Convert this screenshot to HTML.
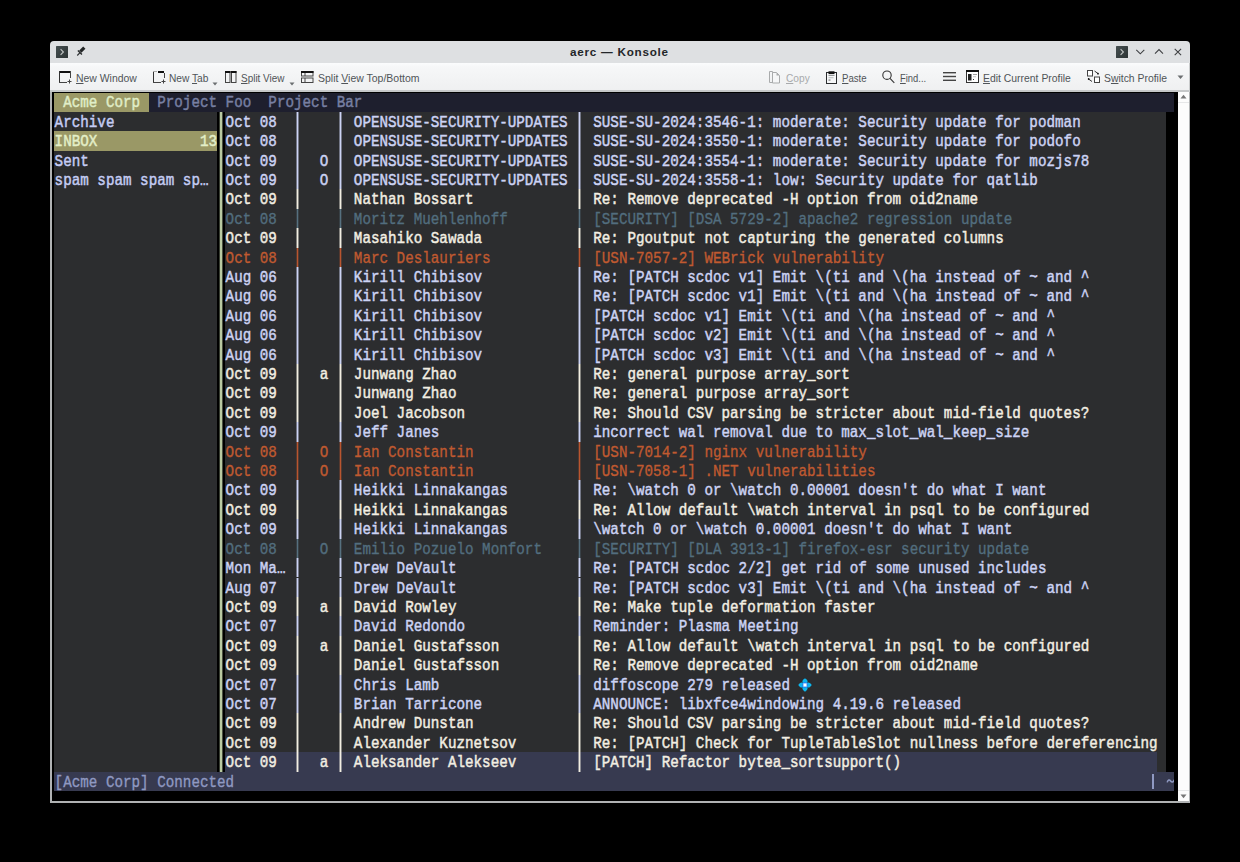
<!DOCTYPE html>
<html><head><meta charset="utf-8">
<style>
html,body{margin:0;padding:0;background:#000;width:1240px;height:862px;overflow:hidden;}
.win{position:absolute;left:50px;top:41px;width:1140px;height:762px;background:#000;border-radius:4px 4px 0 0;}
.title{position:absolute;left:0;top:0;width:1140px;height:22px;background:#dee0e2;border-radius:4px 4px 0 0;}
.tbar{position:absolute;left:0;top:21.7px;width:1140px;height:27.1px;background:linear-gradient(#fbfcfd 0,#f6f7f8 4px,#eff0f1 100%);border-bottom:2px solid #c6c8c9;}
.brd{position:absolute;background:#b0b2b3;}
.r{position:absolute;}
.t{position:absolute;white-space:pre;font-family:"Liberation Mono",monospace;font-size:14.25px;line-height:19.406px;height:19.406px;transform-origin:0 13.49px;transform:translateY(1.9px) scaleY(1.19);}
.ui{position:absolute;transform-origin:0 50%;white-space:pre;font-family:"Liberation Sans",sans-serif;font-size:10.7px;color:#505458;line-height:12px;}
.ui u{text-decoration:underline;text-underline-offset:0.6px;}
.ico{position:absolute;}
</style></head><body>
<div class="win">
 <div class="title"></div>
 <div class="tbar"></div>
</div>
<!-- title contents -->
<svg class="ico" style="left:56px;top:46px" width="12" height="12" viewBox="0 0 12 12"><defs><linearGradient id="cg" x1="0" y1="0" x2="1" y2="1"><stop offset="0" stop-color="#465051"/><stop offset="1" stop-color="#2c3334"/></linearGradient></defs><rect x="0" y="0" width="12" height="12" rx="0.5" fill="url(#cg)"/><path d="M4.6 3.2 L7.4 6 L4.6 8.8" stroke="#c3c6c6" stroke-width="1.1" fill="none"/></svg>
<svg class="ico" style="left:76px;top:46px" width="11" height="11" viewBox="0 0 11 11"><path d="M3.17 4.57 L7.17 0.57 L9.43 2.83 L5.43 6.83Z" fill="#232627"/><path d="M1.9 4.5 L5.9 8.4" stroke="#232627" stroke-width="1.4"/><path d="M4 6.7 L1.3 9.5" stroke="#2a2d2e" stroke-width="1.1"/></svg>
<div class="ui" style="left:570px;top:45.8px;font-weight:bold;font-size:11.7px;letter-spacing:0.75px;color:#232629;">aerc — Konsole</div>
<svg class="ico" style="left:1116px;top:46px" width="12" height="12" viewBox="0 0 12 12"><defs><linearGradient id="cg" x1="0" y1="0" x2="1" y2="1"><stop offset="0" stop-color="#465051"/><stop offset="1" stop-color="#2c3334"/></linearGradient></defs><rect x="0" y="0" width="12" height="12" rx="0.5" fill="url(#cg)"/><path d="M4.6 3.2 L7.4 6 L4.6 8.8" stroke="#c3c6c6" stroke-width="1.1" fill="none"/></svg>
<svg class="ico" style="left:1135px;top:48px" width="11" height="8" viewBox="0 0 11 8"><path d="M1.3 1.8 L5.3 5.8 L9.3 1.8" stroke="#3c3e40" stroke-width="1.05" fill="none"/></svg>
<svg class="ico" style="left:1154px;top:48px" width="11" height="8" viewBox="0 0 11 8"><path d="M1.0 5.6 L5.0 1.6 L9.0 5.6" stroke="#3c3e40" stroke-width="1.05" fill="none"/></svg>
<svg class="ico" style="left:1173px;top:47px" width="10" height="10" viewBox="0 0 10 10"><path d="M1.7 1.9 L8.1 8.2 M8.1 1.9 L1.7 8.2" stroke="#3c3e40" stroke-width="1.05" fill="none"/></svg>

<!-- toolbar -->
<svg class="ico" style="left:59px;top:71px" width="13" height="13" viewBox="0 0 13 13"><rect x="0" y="0" width="12" height="2" fill="#111"/><rect x="0" y="0" width="1" height="12" fill="#333"/><rect x="0" y="11" width="8" height="1" fill="#444"/><rect x="11" y="0" width="1" height="7" fill="#444"/><path d="M10.5 8.5 V12.5 M8.5 10.5 H12.5" stroke="#444" stroke-width="1"/></svg>
<div class="ui" style="left:75.5px;top:72px;transform:scaleX(0.976)"><u>N</u>ew Window</div>
<svg class="ico" style="left:153px;top:71px" width="13" height="13" viewBox="0 0 13 13"><rect x="5" y="0" width="6" height="2" fill="#111"/><rect x="0" y="0" width="1" height="12" fill="#333"/><rect x="0" y="0" width="4" height="1" fill="#aaa"/><rect x="0" y="11" width="8" height="1" fill="#444"/><rect x="11" y="2" width="1" height="5" fill="#444"/><path d="M10.5 8.5 V12.5 M8.5 10.5 H12.5" stroke="#444" stroke-width="1"/></svg>
<div class="ui" style="left:169px;top:72px;transform:scaleX(0.952)">New <u>T</u>ab</div>
<svg class="ico" style="left:212px;top:82px" width="6" height="4" viewBox="0 0 6 4"><path d="M0.5 0.5 L5.5 0.5 L3 3.5Z" fill="#6b6e70"/></svg>
<svg class="ico" style="left:225px;top:71px" width="13" height="13" viewBox="0 0 13 13"><rect x="0.5" y="0.5" width="4.5" height="11" fill="none" stroke="#444" stroke-width="1"/><rect x="0" y="0" width="5.5" height="2" fill="#111"/><rect x="6.5" y="0.5" width="4.5" height="11" fill="none" stroke="#444" stroke-width="1"/><rect x="6" y="0" width="5.5" height="2" fill="#111"/></svg>
<div class="ui" style="left:241px;top:72px;transform:scaleX(0.93)"><u>S</u>plit View</div>
<svg class="ico" style="left:289px;top:82px" width="6" height="4" viewBox="0 0 6 4"><path d="M0.5 0.5 L5.5 0.5 L3 3.5Z" fill="#6b6e70"/></svg>
<svg class="ico" style="left:301px;top:71px" width="13" height="13" viewBox="0 0 13 13"><rect x="0.5" y="0.5" width="11.5" height="4.5" fill="none" stroke="#444" stroke-width="1"/><rect x="0" y="0" width="12.5" height="2" fill="#111"/><rect x="0.5" y="7" width="11.5" height="4.5" fill="none" stroke="#444" stroke-width="1"/><rect x="3.5" y="2" width="1" height="3" fill="#444"/><rect x="3.5" y="7" width="1" height="4.5" fill="#444"/></svg>
<div class="ui" style="left:318px;top:72px;transform:scaleX(0.98)">Split <u>V</u>iew Top/Bottom</div>

<svg class="ico" style="left:769px;top:70.5px" width="12" height="13" viewBox="0 0 12 13"><path d="M0.5 0.5 H3.5 V11.5 H0.5Z" fill="none" stroke="#a9abac"/><path d="M3.5 1.5 H7.5 L10.5 4.5 V12 H3.5Z" fill="#f6f7f8" stroke="#a9abac"/><path d="M7.5 1.5 L10.5 4.5 H7.5Z" fill="#a9abac"/></svg>
<div class="ui" style="left:785.5px;top:72px;color:#a8aaac;transform:scaleX(0.95)"><u>C</u>opy</div>
<svg class="ico" style="left:826px;top:70.5px" width="11" height="13" viewBox="0 0 11 13"><rect x="0.5" y="1.5" width="10" height="11" fill="#f6f7f8" stroke="#2a2c2e" stroke-width="1"/><rect x="2.5" y="0.3" width="6" height="2.8" fill="#111"/><rect x="2.5" y="4" width="6" height="0.9" fill="#8a8c8e"/><rect x="2.5" y="6.3" width="5" height="0.9" fill="#b0b2b4"/><rect x="2.5" y="8.6" width="2" height="0.9" fill="#555"/></svg>
<div class="ui" style="left:842px;top:72px;transform:scaleX(0.90)"><u>P</u>aste</div>
<svg class="ico" style="left:882px;top:70px" width="13" height="14" viewBox="0 0 13 14"><circle cx="5" cy="5.2" r="4.2" fill="none" stroke="#333" stroke-width="1.1"/><path d="M8 8.3 L12.3 12.8" stroke="#333" stroke-width="1.1"/></svg>
<div class="ui" style="left:899.5px;top:72px;transform:scaleX(0.88)"><u>F</u>ind...</div>
<svg class="ico" style="left:943px;top:71px" width="13" height="11" viewBox="0 0 13 11"><rect x="0" y="1" width="13" height="1.4" fill="#444"/><rect x="0" y="4.8" width="13" height="1.4" fill="#444"/><rect x="0" y="8.6" width="13" height="1.4" fill="#444"/></svg>
<svg class="ico" style="left:966px;top:70px" width="13" height="13" viewBox="0 0 13 13"><rect x="0.5" y="0.5" width="12" height="12" fill="#fff" stroke="#333" stroke-width="1"/><rect x="0" y="0" width="13" height="2" fill="#111"/><rect x="2" y="4" width="3.5" height="6.5" fill="#222"/><rect x="7" y="4" width="4" height="0.8" fill="#888"/><rect x="7" y="6.3" width="3" height="0.9" fill="#bbb"/><rect x="7" y="9" width="1" height="1" fill="#333"/></svg>
<div class="ui" style="left:983px;top:72px;transform:scaleX(0.973)"><u>E</u>dit Current Profile</div>
<svg class="ico" style="left:1087px;top:70px" width="13" height="13" viewBox="0 0 13 13"><rect x="0.5" y="0.5" width="5" height="5.5" fill="#fff" stroke="#444" stroke-width="1"/><rect x="7.5" y="7" width="5" height="5.5" fill="#fff" stroke="#444" stroke-width="1"/><path d="M7.5 1 L11 3.5" stroke="#333" stroke-width="1"/><circle cx="11" cy="3.7" r="0.9" fill="#111"/><path d="M5 11.5 L1.5 9" stroke="#333" stroke-width="1"/><circle cx="1.7" cy="9" r="0.9" fill="#111"/></svg>
<div class="ui" style="left:1103.5px;top:72px;transform:scaleX(0.973)">S<u>w</u>itch Profile</div>
<svg class="ico" style="left:1177px;top:75px" width="7" height="5" viewBox="0 0 7 5"><path d="M0.5 0.5 L6.5 0.5 L3.5 4Z" fill="#6b6e70"/></svg>

<!-- scrollbar -->
<div class="r" style="left:1177.6px;top:92px;width:11.4px;height:709px;background:#fcfcfc;"></div>
<div class="r" style="left:1178px;top:102px;width:11px;height:1px;background:#e6e7e8;"></div>
<div class="r" style="left:1178px;top:790px;width:11px;height:1px;background:#e6e7e8;"></div>
<svg class="ico" style="left:1180px;top:94px" width="7" height="5" viewBox="0 0 7 5"><path d="M0.5 4.5 L6.5 4.5 L3.5 0.8Z" fill="#777"/></svg>
<svg class="ico" style="left:1180px;top:793.5px" width="7" height="5" viewBox="0 0 7 5"><path d="M0.5 0.5 L6.5 0.5 L3.5 4.2Z" fill="#777"/></svg>

<!-- borders -->
<div class="brd" style="left:50px;top:91.5px;width:1.5px;height:711.5px;"></div>
<div class="brd" style="left:1188.5px;top:91.5px;width:1.5px;height:711.5px;"></div>
<div class="brd" style="left:1189px;top:62.7px;width:1px;height:29px;background:#c9cbcc"></div>
<div class="brd" style="left:50px;top:801px;width:1140px;height:2px;"></div>

<div class="r" style="left:54.00px;top:92.60px;width:1120.05px;height:19.16px;background:#1e1f2e;"></div>
<div class="r" style="left:54.00px;top:92.60px;width:95.00px;height:19.16px;background:#9a9866;"></div>
<div class="t" style="left:63.15px;top:92.35px;color:#e0eec8;-webkit-text-stroke:0.4px #e0eec8;">Acme Corp</div>
<div class="t" style="left:157.20px;top:92.35px;color:#777fa2;-webkit-text-stroke:0.4px #777fa2;">Project Foo</div>
<div class="t" style="left:268.35px;top:92.35px;color:#777fa2;-webkit-text-stroke:0.4px #777fa2;">Project Bar</div>
<div class="r" style="left:54.00px;top:111.76px;width:163.00px;height:659.80px;background:#2c2d2f;"></div>
<div class="r" style="left:225.00px;top:111.76px;width:940.50px;height:659.80px;background:#2c2d2f;"></div>
<div class="t" style="left:54.60px;top:111.76px;color:#c4ccf4;-webkit-text-stroke:0.4px #c4ccf4;">Archive</div>
<div class="r" style="left:54.00px;top:131.16px;width:163.00px;height:19.41px;background:#9a9866;"></div>
<div class="t" style="left:54.60px;top:131.16px;color:#e4efc8;-webkit-text-stroke:0.4px #e4efc8;">INBOX</div>
<div class="t" style="left:199.95px;top:131.16px;color:#e4efc8;-webkit-text-stroke:0.4px #e4efc8;">13</div>
<div class="t" style="left:54.60px;top:150.57px;color:#c4ccf4;-webkit-text-stroke:0.4px #c4ccf4;">Sent</div>
<div class="t" style="left:54.60px;top:169.97px;color:#c4ccf4;-webkit-text-stroke:0.4px #c4ccf4;">spam spam spam sp…</div>
<div class="r" style="left:219.00px;top:111.76px;width:4.00px;height:659.80px;background:transparent;background:linear-gradient(to right,rgba(185,201,161,.3) 0 1px,#b9c9a1 1px 3px,rgba(185,201,161,.4) 3px 4px);"></div>
<div class="r" style="left:296.00px;top:111.76px;width:3.00px;height:19.41px;background:transparent;background:linear-gradient(to right,rgba(204,211,244,0.45) 0 1px,#ccd3f4 1px 2px,rgba(204,211,244,0.45) 2px 3px);"></div>
<div class="r" style="left:339.00px;top:111.76px;width:3.00px;height:19.41px;background:transparent;background:linear-gradient(to right,rgba(204,211,244,0.45) 0 1px,#ccd3f4 1px 2px,rgba(204,211,244,0.45) 2px 3px);"></div>
<div class="r" style="left:578.00px;top:111.76px;width:3.00px;height:19.41px;background:transparent;background:linear-gradient(to right,rgba(204,211,244,0.45) 0 1px,#ccd3f4 1px 2px,rgba(204,211,244,0.45) 2px 3px);"></div>
<div class="t" style="left:225.60px;top:111.76px;color:#ccd3f4;-webkit-text-stroke:0.4px #ccd3f4;">Oct 08</div>
<div class="t" style="left:353.85px;top:111.76px;color:#ccd3f4;-webkit-text-stroke:0.4px #ccd3f4;">OPENSUSE-SECURITY-UPDATES</div>
<div class="t" style="left:593.25px;top:111.76px;color:#ccd3f4;-webkit-text-stroke:0.4px #ccd3f4;">SUSE-SU-2024:3546-1: moderate: Security update for podman</div>
<div class="r" style="left:296.00px;top:131.16px;width:3.00px;height:19.41px;background:transparent;background:linear-gradient(to right,rgba(204,211,244,0.45) 0 1px,#ccd3f4 1px 2px,rgba(204,211,244,0.45) 2px 3px);"></div>
<div class="r" style="left:339.00px;top:131.16px;width:3.00px;height:19.41px;background:transparent;background:linear-gradient(to right,rgba(204,211,244,0.45) 0 1px,#ccd3f4 1px 2px,rgba(204,211,244,0.45) 2px 3px);"></div>
<div class="r" style="left:578.00px;top:131.16px;width:3.00px;height:19.41px;background:transparent;background:linear-gradient(to right,rgba(204,211,244,0.45) 0 1px,#ccd3f4 1px 2px,rgba(204,211,244,0.45) 2px 3px);"></div>
<div class="t" style="left:225.60px;top:131.16px;color:#ccd3f4;-webkit-text-stroke:0.4px #ccd3f4;">Oct 08</div>
<div class="t" style="left:353.85px;top:131.16px;color:#ccd3f4;-webkit-text-stroke:0.4px #ccd3f4;">OPENSUSE-SECURITY-UPDATES</div>
<div class="t" style="left:593.25px;top:131.16px;color:#ccd3f4;-webkit-text-stroke:0.4px #ccd3f4;">SUSE-SU-2024:3550-1: moderate: Security update for podofo</div>
<div class="r" style="left:296.00px;top:150.57px;width:3.00px;height:19.41px;background:transparent;background:linear-gradient(to right,rgba(204,211,244,0.45) 0 1px,#ccd3f4 1px 2px,rgba(204,211,244,0.45) 2px 3px);"></div>
<div class="r" style="left:339.00px;top:150.57px;width:3.00px;height:19.41px;background:transparent;background:linear-gradient(to right,rgba(204,211,244,0.45) 0 1px,#ccd3f4 1px 2px,rgba(204,211,244,0.45) 2px 3px);"></div>
<div class="r" style="left:578.00px;top:150.57px;width:3.00px;height:19.41px;background:transparent;background:linear-gradient(to right,rgba(204,211,244,0.45) 0 1px,#ccd3f4 1px 2px,rgba(204,211,244,0.45) 2px 3px);"></div>
<div class="t" style="left:225.60px;top:150.57px;color:#ccd3f4;-webkit-text-stroke:0.4px #ccd3f4;">Oct 09</div>
<div class="t" style="left:319.65px;top:150.57px;color:#ccd3f4;-webkit-text-stroke:0.4px #ccd3f4;">O</div>
<div class="t" style="left:353.85px;top:150.57px;color:#ccd3f4;-webkit-text-stroke:0.4px #ccd3f4;">OPENSUSE-SECURITY-UPDATES</div>
<div class="t" style="left:593.25px;top:150.57px;color:#ccd3f4;-webkit-text-stroke:0.4px #ccd3f4;">SUSE-SU-2024:3554-1: moderate: Security update for mozjs78</div>
<div class="r" style="left:296.00px;top:169.97px;width:3.00px;height:19.41px;background:transparent;background:linear-gradient(to right,rgba(204,211,244,0.45) 0 1px,#ccd3f4 1px 2px,rgba(204,211,244,0.45) 2px 3px);"></div>
<div class="r" style="left:339.00px;top:169.97px;width:3.00px;height:19.41px;background:transparent;background:linear-gradient(to right,rgba(204,211,244,0.45) 0 1px,#ccd3f4 1px 2px,rgba(204,211,244,0.45) 2px 3px);"></div>
<div class="r" style="left:578.00px;top:169.97px;width:3.00px;height:19.41px;background:transparent;background:linear-gradient(to right,rgba(204,211,244,0.45) 0 1px,#ccd3f4 1px 2px,rgba(204,211,244,0.45) 2px 3px);"></div>
<div class="t" style="left:225.60px;top:169.97px;color:#ccd3f4;-webkit-text-stroke:0.4px #ccd3f4;">Oct 09</div>
<div class="t" style="left:319.65px;top:169.97px;color:#ccd3f4;-webkit-text-stroke:0.4px #ccd3f4;">O</div>
<div class="t" style="left:353.85px;top:169.97px;color:#ccd3f4;-webkit-text-stroke:0.4px #ccd3f4;">OPENSUSE-SECURITY-UPDATES</div>
<div class="t" style="left:593.25px;top:169.97px;color:#ccd3f4;-webkit-text-stroke:0.4px #ccd3f4;">SUSE-SU-2024:3558-1: low: Security update for qatlib</div>
<div class="r" style="left:296.00px;top:189.38px;width:3.00px;height:19.41px;background:transparent;background:linear-gradient(to right,rgba(242,238,226,0.45) 0 1px,#f2eee2 1px 2px,rgba(242,238,226,0.45) 2px 3px);"></div>
<div class="r" style="left:339.00px;top:189.38px;width:3.00px;height:19.41px;background:transparent;background:linear-gradient(to right,rgba(242,238,226,0.45) 0 1px,#f2eee2 1px 2px,rgba(242,238,226,0.45) 2px 3px);"></div>
<div class="r" style="left:578.00px;top:189.38px;width:3.00px;height:19.41px;background:transparent;background:linear-gradient(to right,rgba(242,238,226,0.45) 0 1px,#f2eee2 1px 2px,rgba(242,238,226,0.45) 2px 3px);"></div>
<div class="t" style="left:225.60px;top:189.38px;color:#f2eee2;-webkit-text-stroke:0.4px #f2eee2;">Oct 09</div>
<div class="t" style="left:353.85px;top:189.38px;color:#f2eee2;-webkit-text-stroke:0.4px #f2eee2;">Nathan Bossart</div>
<div class="t" style="left:593.25px;top:189.38px;color:#f2eee2;-webkit-text-stroke:0.4px #f2eee2;">Re: Remove deprecated -H option from oid2name</div>
<div class="r" style="left:296.00px;top:208.79px;width:3.00px;height:19.41px;background:transparent;background:linear-gradient(to right,rgba(86,112,127,0.3) 0 1px,#56707f 1px 2px,rgba(86,112,127,0.3) 2px 3px);"></div>
<div class="r" style="left:339.00px;top:208.79px;width:3.00px;height:19.41px;background:transparent;background:linear-gradient(to right,rgba(86,112,127,0.3) 0 1px,#56707f 1px 2px,rgba(86,112,127,0.3) 2px 3px);"></div>
<div class="r" style="left:578.00px;top:208.79px;width:3.00px;height:19.41px;background:transparent;background:linear-gradient(to right,rgba(86,112,127,0.3) 0 1px,#56707f 1px 2px,rgba(86,112,127,0.3) 2px 3px);"></div>
<div class="t" style="left:225.60px;top:208.79px;color:#526d7e;-webkit-text-stroke:0.3px #526d7e;">Oct 08</div>
<div class="t" style="left:353.85px;top:208.79px;color:#526d7e;-webkit-text-stroke:0.3px #526d7e;">Moritz Muehlenhoff</div>
<div class="t" style="left:593.25px;top:208.79px;color:#526d7e;-webkit-text-stroke:0.3px #526d7e;">[SECURITY] [DSA 5729-2] apache2 regression update</div>
<div class="r" style="left:296.00px;top:228.19px;width:3.00px;height:19.41px;background:transparent;background:linear-gradient(to right,rgba(242,238,226,0.45) 0 1px,#f2eee2 1px 2px,rgba(242,238,226,0.45) 2px 3px);"></div>
<div class="r" style="left:339.00px;top:228.19px;width:3.00px;height:19.41px;background:transparent;background:linear-gradient(to right,rgba(242,238,226,0.45) 0 1px,#f2eee2 1px 2px,rgba(242,238,226,0.45) 2px 3px);"></div>
<div class="r" style="left:578.00px;top:228.19px;width:3.00px;height:19.41px;background:transparent;background:linear-gradient(to right,rgba(242,238,226,0.45) 0 1px,#f2eee2 1px 2px,rgba(242,238,226,0.45) 2px 3px);"></div>
<div class="t" style="left:225.60px;top:228.19px;color:#f2eee2;-webkit-text-stroke:0.4px #f2eee2;">Oct 09</div>
<div class="t" style="left:353.85px;top:228.19px;color:#f2eee2;-webkit-text-stroke:0.4px #f2eee2;">Masahiko Sawada</div>
<div class="t" style="left:593.25px;top:228.19px;color:#f2eee2;-webkit-text-stroke:0.4px #f2eee2;">Re: Pgoutput not capturing the generated columns</div>
<div class="r" style="left:296.00px;top:247.60px;width:3.00px;height:19.41px;background:transparent;background:linear-gradient(to right,rgba(185,85,47,0.3) 0 1px,#b9552f 1px 2px,rgba(185,85,47,0.3) 2px 3px);"></div>
<div class="r" style="left:339.00px;top:247.60px;width:3.00px;height:19.41px;background:transparent;background:linear-gradient(to right,rgba(185,85,47,0.3) 0 1px,#b9552f 1px 2px,rgba(185,85,47,0.3) 2px 3px);"></div>
<div class="r" style="left:578.00px;top:247.60px;width:3.00px;height:19.41px;background:transparent;background:linear-gradient(to right,rgba(185,85,47,0.3) 0 1px,#b9552f 1px 2px,rgba(185,85,47,0.3) 2px 3px);"></div>
<div class="t" style="left:225.60px;top:247.60px;color:#c05a30;-webkit-text-stroke:0.3px #c05a30;">Oct 08</div>
<div class="t" style="left:353.85px;top:247.60px;color:#c05a30;-webkit-text-stroke:0.3px #c05a30;">Marc Deslauriers</div>
<div class="t" style="left:593.25px;top:247.60px;color:#c05a30;-webkit-text-stroke:0.3px #c05a30;">[USN-7057-2] WEBrick vulnerability</div>
<div class="r" style="left:296.00px;top:267.00px;width:3.00px;height:19.41px;background:transparent;background:linear-gradient(to right,rgba(204,211,244,0.45) 0 1px,#ccd3f4 1px 2px,rgba(204,211,244,0.45) 2px 3px);"></div>
<div class="r" style="left:339.00px;top:267.00px;width:3.00px;height:19.41px;background:transparent;background:linear-gradient(to right,rgba(204,211,244,0.45) 0 1px,#ccd3f4 1px 2px,rgba(204,211,244,0.45) 2px 3px);"></div>
<div class="r" style="left:578.00px;top:267.00px;width:3.00px;height:19.41px;background:transparent;background:linear-gradient(to right,rgba(204,211,244,0.45) 0 1px,#ccd3f4 1px 2px,rgba(204,211,244,0.45) 2px 3px);"></div>
<div class="t" style="left:225.60px;top:267.00px;color:#ccd3f4;-webkit-text-stroke:0.4px #ccd3f4;">Aug 06</div>
<div class="t" style="left:353.85px;top:267.00px;color:#ccd3f4;-webkit-text-stroke:0.4px #ccd3f4;">Kirill Chibisov</div>
<div class="t" style="left:593.25px;top:267.00px;color:#ccd3f4;-webkit-text-stroke:0.4px #ccd3f4;">Re: [PATCH scdoc v1] Emit \(ti and \(ha instead of ~ and ^</div>
<div class="r" style="left:296.00px;top:286.41px;width:3.00px;height:19.41px;background:transparent;background:linear-gradient(to right,rgba(204,211,244,0.45) 0 1px,#ccd3f4 1px 2px,rgba(204,211,244,0.45) 2px 3px);"></div>
<div class="r" style="left:339.00px;top:286.41px;width:3.00px;height:19.41px;background:transparent;background:linear-gradient(to right,rgba(204,211,244,0.45) 0 1px,#ccd3f4 1px 2px,rgba(204,211,244,0.45) 2px 3px);"></div>
<div class="r" style="left:578.00px;top:286.41px;width:3.00px;height:19.41px;background:transparent;background:linear-gradient(to right,rgba(204,211,244,0.45) 0 1px,#ccd3f4 1px 2px,rgba(204,211,244,0.45) 2px 3px);"></div>
<div class="t" style="left:225.60px;top:286.41px;color:#ccd3f4;-webkit-text-stroke:0.4px #ccd3f4;">Aug 06</div>
<div class="t" style="left:353.85px;top:286.41px;color:#ccd3f4;-webkit-text-stroke:0.4px #ccd3f4;">Kirill Chibisov</div>
<div class="t" style="left:593.25px;top:286.41px;color:#ccd3f4;-webkit-text-stroke:0.4px #ccd3f4;">Re: [PATCH scdoc v1] Emit \(ti and \(ha instead of ~ and ^</div>
<div class="r" style="left:296.00px;top:305.82px;width:3.00px;height:19.41px;background:transparent;background:linear-gradient(to right,rgba(204,211,244,0.45) 0 1px,#ccd3f4 1px 2px,rgba(204,211,244,0.45) 2px 3px);"></div>
<div class="r" style="left:339.00px;top:305.82px;width:3.00px;height:19.41px;background:transparent;background:linear-gradient(to right,rgba(204,211,244,0.45) 0 1px,#ccd3f4 1px 2px,rgba(204,211,244,0.45) 2px 3px);"></div>
<div class="r" style="left:578.00px;top:305.82px;width:3.00px;height:19.41px;background:transparent;background:linear-gradient(to right,rgba(204,211,244,0.45) 0 1px,#ccd3f4 1px 2px,rgba(204,211,244,0.45) 2px 3px);"></div>
<div class="t" style="left:225.60px;top:305.82px;color:#ccd3f4;-webkit-text-stroke:0.4px #ccd3f4;">Aug 06</div>
<div class="t" style="left:353.85px;top:305.82px;color:#ccd3f4;-webkit-text-stroke:0.4px #ccd3f4;">Kirill Chibisov</div>
<div class="t" style="left:593.25px;top:305.82px;color:#ccd3f4;-webkit-text-stroke:0.4px #ccd3f4;">[PATCH scdoc v1] Emit \(ti and \(ha instead of ~ and ^</div>
<div class="r" style="left:296.00px;top:325.22px;width:3.00px;height:19.41px;background:transparent;background:linear-gradient(to right,rgba(204,211,244,0.45) 0 1px,#ccd3f4 1px 2px,rgba(204,211,244,0.45) 2px 3px);"></div>
<div class="r" style="left:339.00px;top:325.22px;width:3.00px;height:19.41px;background:transparent;background:linear-gradient(to right,rgba(204,211,244,0.45) 0 1px,#ccd3f4 1px 2px,rgba(204,211,244,0.45) 2px 3px);"></div>
<div class="r" style="left:578.00px;top:325.22px;width:3.00px;height:19.41px;background:transparent;background:linear-gradient(to right,rgba(204,211,244,0.45) 0 1px,#ccd3f4 1px 2px,rgba(204,211,244,0.45) 2px 3px);"></div>
<div class="t" style="left:225.60px;top:325.22px;color:#ccd3f4;-webkit-text-stroke:0.4px #ccd3f4;">Aug 06</div>
<div class="t" style="left:353.85px;top:325.22px;color:#ccd3f4;-webkit-text-stroke:0.4px #ccd3f4;">Kirill Chibisov</div>
<div class="t" style="left:593.25px;top:325.22px;color:#ccd3f4;-webkit-text-stroke:0.4px #ccd3f4;">[PATCH scdoc v2] Emit \(ti and \(ha instead of ~ and ^</div>
<div class="r" style="left:296.00px;top:344.63px;width:3.00px;height:19.41px;background:transparent;background:linear-gradient(to right,rgba(204,211,244,0.45) 0 1px,#ccd3f4 1px 2px,rgba(204,211,244,0.45) 2px 3px);"></div>
<div class="r" style="left:339.00px;top:344.63px;width:3.00px;height:19.41px;background:transparent;background:linear-gradient(to right,rgba(204,211,244,0.45) 0 1px,#ccd3f4 1px 2px,rgba(204,211,244,0.45) 2px 3px);"></div>
<div class="r" style="left:578.00px;top:344.63px;width:3.00px;height:19.41px;background:transparent;background:linear-gradient(to right,rgba(204,211,244,0.45) 0 1px,#ccd3f4 1px 2px,rgba(204,211,244,0.45) 2px 3px);"></div>
<div class="t" style="left:225.60px;top:344.63px;color:#ccd3f4;-webkit-text-stroke:0.4px #ccd3f4;">Aug 06</div>
<div class="t" style="left:353.85px;top:344.63px;color:#ccd3f4;-webkit-text-stroke:0.4px #ccd3f4;">Kirill Chibisov</div>
<div class="t" style="left:593.25px;top:344.63px;color:#ccd3f4;-webkit-text-stroke:0.4px #ccd3f4;">[PATCH scdoc v3] Emit \(ti and \(ha instead of ~ and ^</div>
<div class="r" style="left:296.00px;top:364.03px;width:3.00px;height:19.41px;background:transparent;background:linear-gradient(to right,rgba(242,238,226,0.45) 0 1px,#f2eee2 1px 2px,rgba(242,238,226,0.45) 2px 3px);"></div>
<div class="r" style="left:339.00px;top:364.03px;width:3.00px;height:19.41px;background:transparent;background:linear-gradient(to right,rgba(242,238,226,0.45) 0 1px,#f2eee2 1px 2px,rgba(242,238,226,0.45) 2px 3px);"></div>
<div class="r" style="left:578.00px;top:364.03px;width:3.00px;height:19.41px;background:transparent;background:linear-gradient(to right,rgba(242,238,226,0.45) 0 1px,#f2eee2 1px 2px,rgba(242,238,226,0.45) 2px 3px);"></div>
<div class="t" style="left:225.60px;top:364.03px;color:#f2eee2;-webkit-text-stroke:0.4px #f2eee2;">Oct 09</div>
<div class="t" style="left:319.65px;top:364.03px;color:#f2eee2;-webkit-text-stroke:0.4px #f2eee2;">a</div>
<div class="t" style="left:353.85px;top:364.03px;color:#f2eee2;-webkit-text-stroke:0.4px #f2eee2;">Junwang Zhao</div>
<div class="t" style="left:593.25px;top:364.03px;color:#f2eee2;-webkit-text-stroke:0.4px #f2eee2;">Re: general purpose array_sort</div>
<div class="r" style="left:296.00px;top:383.44px;width:3.00px;height:19.41px;background:transparent;background:linear-gradient(to right,rgba(242,238,226,0.45) 0 1px,#f2eee2 1px 2px,rgba(242,238,226,0.45) 2px 3px);"></div>
<div class="r" style="left:339.00px;top:383.44px;width:3.00px;height:19.41px;background:transparent;background:linear-gradient(to right,rgba(242,238,226,0.45) 0 1px,#f2eee2 1px 2px,rgba(242,238,226,0.45) 2px 3px);"></div>
<div class="r" style="left:578.00px;top:383.44px;width:3.00px;height:19.41px;background:transparent;background:linear-gradient(to right,rgba(242,238,226,0.45) 0 1px,#f2eee2 1px 2px,rgba(242,238,226,0.45) 2px 3px);"></div>
<div class="t" style="left:225.60px;top:383.44px;color:#f2eee2;-webkit-text-stroke:0.4px #f2eee2;">Oct 09</div>
<div class="t" style="left:353.85px;top:383.44px;color:#f2eee2;-webkit-text-stroke:0.4px #f2eee2;">Junwang Zhao</div>
<div class="t" style="left:593.25px;top:383.44px;color:#f2eee2;-webkit-text-stroke:0.4px #f2eee2;">Re: general purpose array_sort</div>
<div class="r" style="left:296.00px;top:402.85px;width:3.00px;height:19.41px;background:transparent;background:linear-gradient(to right,rgba(242,238,226,0.45) 0 1px,#f2eee2 1px 2px,rgba(242,238,226,0.45) 2px 3px);"></div>
<div class="r" style="left:339.00px;top:402.85px;width:3.00px;height:19.41px;background:transparent;background:linear-gradient(to right,rgba(242,238,226,0.45) 0 1px,#f2eee2 1px 2px,rgba(242,238,226,0.45) 2px 3px);"></div>
<div class="r" style="left:578.00px;top:402.85px;width:3.00px;height:19.41px;background:transparent;background:linear-gradient(to right,rgba(242,238,226,0.45) 0 1px,#f2eee2 1px 2px,rgba(242,238,226,0.45) 2px 3px);"></div>
<div class="t" style="left:225.60px;top:402.85px;color:#f2eee2;-webkit-text-stroke:0.4px #f2eee2;">Oct 09</div>
<div class="t" style="left:353.85px;top:402.85px;color:#f2eee2;-webkit-text-stroke:0.4px #f2eee2;">Joel Jacobson</div>
<div class="t" style="left:593.25px;top:402.85px;color:#f2eee2;-webkit-text-stroke:0.4px #f2eee2;">Re: Should CSV parsing be stricter about mid-field quotes?</div>
<div class="r" style="left:296.00px;top:422.25px;width:3.00px;height:19.41px;background:transparent;background:linear-gradient(to right,rgba(204,211,244,0.45) 0 1px,#ccd3f4 1px 2px,rgba(204,211,244,0.45) 2px 3px);"></div>
<div class="r" style="left:339.00px;top:422.25px;width:3.00px;height:19.41px;background:transparent;background:linear-gradient(to right,rgba(204,211,244,0.45) 0 1px,#ccd3f4 1px 2px,rgba(204,211,244,0.45) 2px 3px);"></div>
<div class="r" style="left:578.00px;top:422.25px;width:3.00px;height:19.41px;background:transparent;background:linear-gradient(to right,rgba(204,211,244,0.45) 0 1px,#ccd3f4 1px 2px,rgba(204,211,244,0.45) 2px 3px);"></div>
<div class="t" style="left:225.60px;top:422.25px;color:#ccd3f4;-webkit-text-stroke:0.4px #ccd3f4;">Oct 09</div>
<div class="t" style="left:353.85px;top:422.25px;color:#ccd3f4;-webkit-text-stroke:0.4px #ccd3f4;">Jeff Janes</div>
<div class="t" style="left:593.25px;top:422.25px;color:#ccd3f4;-webkit-text-stroke:0.4px #ccd3f4;">incorrect wal removal due to max_slot_wal_keep_size</div>
<div class="r" style="left:296.00px;top:441.66px;width:3.00px;height:19.41px;background:transparent;background:linear-gradient(to right,rgba(185,85,47,0.3) 0 1px,#b9552f 1px 2px,rgba(185,85,47,0.3) 2px 3px);"></div>
<div class="r" style="left:339.00px;top:441.66px;width:3.00px;height:19.41px;background:transparent;background:linear-gradient(to right,rgba(185,85,47,0.3) 0 1px,#b9552f 1px 2px,rgba(185,85,47,0.3) 2px 3px);"></div>
<div class="r" style="left:578.00px;top:441.66px;width:3.00px;height:19.41px;background:transparent;background:linear-gradient(to right,rgba(185,85,47,0.3) 0 1px,#b9552f 1px 2px,rgba(185,85,47,0.3) 2px 3px);"></div>
<div class="t" style="left:225.60px;top:441.66px;color:#c05a30;-webkit-text-stroke:0.3px #c05a30;">Oct 08</div>
<div class="t" style="left:319.65px;top:441.66px;color:#c05a30;-webkit-text-stroke:0.3px #c05a30;">O</div>
<div class="t" style="left:353.85px;top:441.66px;color:#c05a30;-webkit-text-stroke:0.3px #c05a30;">Ian Constantin</div>
<div class="t" style="left:593.25px;top:441.66px;color:#c05a30;-webkit-text-stroke:0.3px #c05a30;">[USN-7014-2] nginx vulnerability</div>
<div class="r" style="left:296.00px;top:461.06px;width:3.00px;height:19.41px;background:transparent;background:linear-gradient(to right,rgba(185,85,47,0.3) 0 1px,#b9552f 1px 2px,rgba(185,85,47,0.3) 2px 3px);"></div>
<div class="r" style="left:339.00px;top:461.06px;width:3.00px;height:19.41px;background:transparent;background:linear-gradient(to right,rgba(185,85,47,0.3) 0 1px,#b9552f 1px 2px,rgba(185,85,47,0.3) 2px 3px);"></div>
<div class="r" style="left:578.00px;top:461.06px;width:3.00px;height:19.41px;background:transparent;background:linear-gradient(to right,rgba(185,85,47,0.3) 0 1px,#b9552f 1px 2px,rgba(185,85,47,0.3) 2px 3px);"></div>
<div class="t" style="left:225.60px;top:461.06px;color:#c05a30;-webkit-text-stroke:0.3px #c05a30;">Oct 08</div>
<div class="t" style="left:319.65px;top:461.06px;color:#c05a30;-webkit-text-stroke:0.3px #c05a30;">O</div>
<div class="t" style="left:353.85px;top:461.06px;color:#c05a30;-webkit-text-stroke:0.3px #c05a30;">Ian Constantin</div>
<div class="t" style="left:593.25px;top:461.06px;color:#c05a30;-webkit-text-stroke:0.3px #c05a30;">[USN-7058-1] .NET vulnerabilities</div>
<div class="r" style="left:296.00px;top:480.47px;width:3.00px;height:19.41px;background:transparent;background:linear-gradient(to right,rgba(204,211,244,0.45) 0 1px,#ccd3f4 1px 2px,rgba(204,211,244,0.45) 2px 3px);"></div>
<div class="r" style="left:339.00px;top:480.47px;width:3.00px;height:19.41px;background:transparent;background:linear-gradient(to right,rgba(204,211,244,0.45) 0 1px,#ccd3f4 1px 2px,rgba(204,211,244,0.45) 2px 3px);"></div>
<div class="r" style="left:578.00px;top:480.47px;width:3.00px;height:19.41px;background:transparent;background:linear-gradient(to right,rgba(204,211,244,0.45) 0 1px,#ccd3f4 1px 2px,rgba(204,211,244,0.45) 2px 3px);"></div>
<div class="t" style="left:225.60px;top:480.47px;color:#ccd3f4;-webkit-text-stroke:0.4px #ccd3f4;">Oct 09</div>
<div class="t" style="left:353.85px;top:480.47px;color:#ccd3f4;-webkit-text-stroke:0.4px #ccd3f4;">Heikki Linnakangas</div>
<div class="t" style="left:593.25px;top:480.47px;color:#ccd3f4;-webkit-text-stroke:0.4px #ccd3f4;">Re: \watch 0 or \watch 0.00001 doesn&#x27;t do what I want</div>
<div class="r" style="left:296.00px;top:499.88px;width:3.00px;height:19.41px;background:transparent;background:linear-gradient(to right,rgba(242,238,226,0.45) 0 1px,#f2eee2 1px 2px,rgba(242,238,226,0.45) 2px 3px);"></div>
<div class="r" style="left:339.00px;top:499.88px;width:3.00px;height:19.41px;background:transparent;background:linear-gradient(to right,rgba(242,238,226,0.45) 0 1px,#f2eee2 1px 2px,rgba(242,238,226,0.45) 2px 3px);"></div>
<div class="r" style="left:578.00px;top:499.88px;width:3.00px;height:19.41px;background:transparent;background:linear-gradient(to right,rgba(242,238,226,0.45) 0 1px,#f2eee2 1px 2px,rgba(242,238,226,0.45) 2px 3px);"></div>
<div class="t" style="left:225.60px;top:499.88px;color:#f2eee2;-webkit-text-stroke:0.4px #f2eee2;">Oct 09</div>
<div class="t" style="left:353.85px;top:499.88px;color:#f2eee2;-webkit-text-stroke:0.4px #f2eee2;">Heikki Linnakangas</div>
<div class="t" style="left:593.25px;top:499.88px;color:#f2eee2;-webkit-text-stroke:0.4px #f2eee2;">Re: Allow default \watch interval in psql to be configured</div>
<div class="r" style="left:296.00px;top:519.28px;width:3.00px;height:19.41px;background:transparent;background:linear-gradient(to right,rgba(204,211,244,0.45) 0 1px,#ccd3f4 1px 2px,rgba(204,211,244,0.45) 2px 3px);"></div>
<div class="r" style="left:339.00px;top:519.28px;width:3.00px;height:19.41px;background:transparent;background:linear-gradient(to right,rgba(204,211,244,0.45) 0 1px,#ccd3f4 1px 2px,rgba(204,211,244,0.45) 2px 3px);"></div>
<div class="r" style="left:578.00px;top:519.28px;width:3.00px;height:19.41px;background:transparent;background:linear-gradient(to right,rgba(204,211,244,0.45) 0 1px,#ccd3f4 1px 2px,rgba(204,211,244,0.45) 2px 3px);"></div>
<div class="t" style="left:225.60px;top:519.28px;color:#ccd3f4;-webkit-text-stroke:0.4px #ccd3f4;">Oct 09</div>
<div class="t" style="left:353.85px;top:519.28px;color:#ccd3f4;-webkit-text-stroke:0.4px #ccd3f4;">Heikki Linnakangas</div>
<div class="t" style="left:593.25px;top:519.28px;color:#ccd3f4;-webkit-text-stroke:0.4px #ccd3f4;">\watch 0 or \watch 0.00001 doesn&#x27;t do what I want</div>
<div class="r" style="left:296.00px;top:538.69px;width:3.00px;height:19.41px;background:transparent;background:linear-gradient(to right,rgba(86,112,127,0.3) 0 1px,#56707f 1px 2px,rgba(86,112,127,0.3) 2px 3px);"></div>
<div class="r" style="left:339.00px;top:538.69px;width:3.00px;height:19.41px;background:transparent;background:linear-gradient(to right,rgba(86,112,127,0.3) 0 1px,#56707f 1px 2px,rgba(86,112,127,0.3) 2px 3px);"></div>
<div class="r" style="left:578.00px;top:538.69px;width:3.00px;height:19.41px;background:transparent;background:linear-gradient(to right,rgba(86,112,127,0.3) 0 1px,#56707f 1px 2px,rgba(86,112,127,0.3) 2px 3px);"></div>
<div class="t" style="left:225.60px;top:538.69px;color:#526d7e;-webkit-text-stroke:0.3px #526d7e;">Oct 08</div>
<div class="t" style="left:319.65px;top:538.69px;color:#526d7e;-webkit-text-stroke:0.3px #526d7e;">O</div>
<div class="t" style="left:353.85px;top:538.69px;color:#526d7e;-webkit-text-stroke:0.3px #526d7e;">Emilio Pozuelo Monfort</div>
<div class="t" style="left:593.25px;top:538.69px;color:#526d7e;-webkit-text-stroke:0.3px #526d7e;">[SECURITY] [DLA 3913-1] firefox-esr security update</div>
<div class="r" style="left:296.00px;top:558.09px;width:3.00px;height:19.41px;background:transparent;background:linear-gradient(to right,rgba(204,211,244,0.45) 0 1px,#ccd3f4 1px 2px,rgba(204,211,244,0.45) 2px 3px);"></div>
<div class="r" style="left:339.00px;top:558.09px;width:3.00px;height:19.41px;background:transparent;background:linear-gradient(to right,rgba(204,211,244,0.45) 0 1px,#ccd3f4 1px 2px,rgba(204,211,244,0.45) 2px 3px);"></div>
<div class="r" style="left:578.00px;top:558.09px;width:3.00px;height:19.41px;background:transparent;background:linear-gradient(to right,rgba(204,211,244,0.45) 0 1px,#ccd3f4 1px 2px,rgba(204,211,244,0.45) 2px 3px);"></div>
<div class="t" style="left:225.60px;top:558.09px;color:#ccd3f4;-webkit-text-stroke:0.4px #ccd3f4;">Mon Ma…</div>
<div class="t" style="left:353.85px;top:558.09px;color:#ccd3f4;-webkit-text-stroke:0.4px #ccd3f4;">Drew DeVault</div>
<div class="t" style="left:593.25px;top:558.09px;color:#ccd3f4;-webkit-text-stroke:0.4px #ccd3f4;">Re: [PATCH scdoc 2/2] get rid of some unused includes</div>
<div class="r" style="left:296.00px;top:577.50px;width:3.00px;height:19.41px;background:transparent;background:linear-gradient(to right,rgba(204,211,244,0.45) 0 1px,#ccd3f4 1px 2px,rgba(204,211,244,0.45) 2px 3px);"></div>
<div class="r" style="left:339.00px;top:577.50px;width:3.00px;height:19.41px;background:transparent;background:linear-gradient(to right,rgba(204,211,244,0.45) 0 1px,#ccd3f4 1px 2px,rgba(204,211,244,0.45) 2px 3px);"></div>
<div class="r" style="left:578.00px;top:577.50px;width:3.00px;height:19.41px;background:transparent;background:linear-gradient(to right,rgba(204,211,244,0.45) 0 1px,#ccd3f4 1px 2px,rgba(204,211,244,0.45) 2px 3px);"></div>
<div class="t" style="left:225.60px;top:577.50px;color:#ccd3f4;-webkit-text-stroke:0.4px #ccd3f4;">Aug 07</div>
<div class="t" style="left:353.85px;top:577.50px;color:#ccd3f4;-webkit-text-stroke:0.4px #ccd3f4;">Drew DeVault</div>
<div class="t" style="left:593.25px;top:577.50px;color:#ccd3f4;-webkit-text-stroke:0.4px #ccd3f4;">Re: [PATCH scdoc v3] Emit \(ti and \(ha instead of ~ and ^</div>
<div class="r" style="left:296.00px;top:596.91px;width:3.00px;height:19.41px;background:transparent;background:linear-gradient(to right,rgba(242,238,226,0.45) 0 1px,#f2eee2 1px 2px,rgba(242,238,226,0.45) 2px 3px);"></div>
<div class="r" style="left:339.00px;top:596.91px;width:3.00px;height:19.41px;background:transparent;background:linear-gradient(to right,rgba(242,238,226,0.45) 0 1px,#f2eee2 1px 2px,rgba(242,238,226,0.45) 2px 3px);"></div>
<div class="r" style="left:578.00px;top:596.91px;width:3.00px;height:19.41px;background:transparent;background:linear-gradient(to right,rgba(242,238,226,0.45) 0 1px,#f2eee2 1px 2px,rgba(242,238,226,0.45) 2px 3px);"></div>
<div class="t" style="left:225.60px;top:596.91px;color:#f2eee2;-webkit-text-stroke:0.4px #f2eee2;">Oct 09</div>
<div class="t" style="left:319.65px;top:596.91px;color:#f2eee2;-webkit-text-stroke:0.4px #f2eee2;">a</div>
<div class="t" style="left:353.85px;top:596.91px;color:#f2eee2;-webkit-text-stroke:0.4px #f2eee2;">David Rowley</div>
<div class="t" style="left:593.25px;top:596.91px;color:#f2eee2;-webkit-text-stroke:0.4px #f2eee2;">Re: Make tuple deformation faster</div>
<div class="r" style="left:296.00px;top:616.31px;width:3.00px;height:19.41px;background:transparent;background:linear-gradient(to right,rgba(204,211,244,0.45) 0 1px,#ccd3f4 1px 2px,rgba(204,211,244,0.45) 2px 3px);"></div>
<div class="r" style="left:339.00px;top:616.31px;width:3.00px;height:19.41px;background:transparent;background:linear-gradient(to right,rgba(204,211,244,0.45) 0 1px,#ccd3f4 1px 2px,rgba(204,211,244,0.45) 2px 3px);"></div>
<div class="r" style="left:578.00px;top:616.31px;width:3.00px;height:19.41px;background:transparent;background:linear-gradient(to right,rgba(204,211,244,0.45) 0 1px,#ccd3f4 1px 2px,rgba(204,211,244,0.45) 2px 3px);"></div>
<div class="t" style="left:225.60px;top:616.31px;color:#ccd3f4;-webkit-text-stroke:0.4px #ccd3f4;">Oct 07</div>
<div class="t" style="left:353.85px;top:616.31px;color:#ccd3f4;-webkit-text-stroke:0.4px #ccd3f4;">David Redondo</div>
<div class="t" style="left:593.25px;top:616.31px;color:#ccd3f4;-webkit-text-stroke:0.4px #ccd3f4;">Reminder: Plasma Meeting</div>
<div class="r" style="left:296.00px;top:635.72px;width:3.00px;height:19.41px;background:transparent;background:linear-gradient(to right,rgba(242,238,226,0.45) 0 1px,#f2eee2 1px 2px,rgba(242,238,226,0.45) 2px 3px);"></div>
<div class="r" style="left:339.00px;top:635.72px;width:3.00px;height:19.41px;background:transparent;background:linear-gradient(to right,rgba(242,238,226,0.45) 0 1px,#f2eee2 1px 2px,rgba(242,238,226,0.45) 2px 3px);"></div>
<div class="r" style="left:578.00px;top:635.72px;width:3.00px;height:19.41px;background:transparent;background:linear-gradient(to right,rgba(242,238,226,0.45) 0 1px,#f2eee2 1px 2px,rgba(242,238,226,0.45) 2px 3px);"></div>
<div class="t" style="left:225.60px;top:635.72px;color:#f2eee2;-webkit-text-stroke:0.4px #f2eee2;">Oct 09</div>
<div class="t" style="left:319.65px;top:635.72px;color:#f2eee2;-webkit-text-stroke:0.4px #f2eee2;">a</div>
<div class="t" style="left:353.85px;top:635.72px;color:#f2eee2;-webkit-text-stroke:0.4px #f2eee2;">Daniel Gustafsson</div>
<div class="t" style="left:593.25px;top:635.72px;color:#f2eee2;-webkit-text-stroke:0.4px #f2eee2;">Re: Allow default \watch interval in psql to be configured</div>
<div class="r" style="left:296.00px;top:655.12px;width:3.00px;height:19.41px;background:transparent;background:linear-gradient(to right,rgba(242,238,226,0.45) 0 1px,#f2eee2 1px 2px,rgba(242,238,226,0.45) 2px 3px);"></div>
<div class="r" style="left:339.00px;top:655.12px;width:3.00px;height:19.41px;background:transparent;background:linear-gradient(to right,rgba(242,238,226,0.45) 0 1px,#f2eee2 1px 2px,rgba(242,238,226,0.45) 2px 3px);"></div>
<div class="r" style="left:578.00px;top:655.12px;width:3.00px;height:19.41px;background:transparent;background:linear-gradient(to right,rgba(242,238,226,0.45) 0 1px,#f2eee2 1px 2px,rgba(242,238,226,0.45) 2px 3px);"></div>
<div class="t" style="left:225.60px;top:655.12px;color:#f2eee2;-webkit-text-stroke:0.4px #f2eee2;">Oct 09</div>
<div class="t" style="left:353.85px;top:655.12px;color:#f2eee2;-webkit-text-stroke:0.4px #f2eee2;">Daniel Gustafsson</div>
<div class="t" style="left:593.25px;top:655.12px;color:#f2eee2;-webkit-text-stroke:0.4px #f2eee2;">Re: Remove deprecated -H option from oid2name</div>
<div class="r" style="left:296.00px;top:674.53px;width:3.00px;height:19.41px;background:transparent;background:linear-gradient(to right,rgba(204,211,244,0.45) 0 1px,#ccd3f4 1px 2px,rgba(204,211,244,0.45) 2px 3px);"></div>
<div class="r" style="left:339.00px;top:674.53px;width:3.00px;height:19.41px;background:transparent;background:linear-gradient(to right,rgba(204,211,244,0.45) 0 1px,#ccd3f4 1px 2px,rgba(204,211,244,0.45) 2px 3px);"></div>
<div class="r" style="left:578.00px;top:674.53px;width:3.00px;height:19.41px;background:transparent;background:linear-gradient(to right,rgba(204,211,244,0.45) 0 1px,#ccd3f4 1px 2px,rgba(204,211,244,0.45) 2px 3px);"></div>
<div class="t" style="left:225.60px;top:674.53px;color:#ccd3f4;-webkit-text-stroke:0.4px #ccd3f4;">Oct 07</div>
<div class="t" style="left:353.85px;top:674.53px;color:#ccd3f4;-webkit-text-stroke:0.4px #ccd3f4;">Chris Lamb</div>
<div class="t" style="left:593.25px;top:674.53px;color:#ccd3f4;-webkit-text-stroke:0.4px #ccd3f4;">diffoscope 279 released</div>
<svg class="r" style="left:798.30px;top:677.53px" width="14" height="14" viewBox="0 0 14 14"><g fill="#0cb6ee"><path id="pt" d="M7 0.3 C9.6 1.9 11.2 4.3 7 7 C2.8 4.3 4.4 1.9 7 0.3Z"/><path d="M7 0.3 C9.6 1.9 11.2 4.3 7 7 C2.8 4.3 4.4 1.9 7 0.3Z" transform="rotate(90 7 7)"/><path d="M7 0.3 C9.6 1.9 11.2 4.3 7 7 C2.8 4.3 4.4 1.9 7 0.3Z" transform="rotate(180 7 7)"/><path d="M7 0.3 C9.6 1.9 11.2 4.3 7 7 C2.8 4.3 4.4 1.9 7 0.3Z" transform="rotate(270 7 7)"/></g><circle cx="7" cy="7" r="2.9" fill="#2383f2"/><rect x="5.3" y="5.3" width="3.4" height="3.4" fill="#dff0ff"/><rect x="6" y="6" width="2" height="2" fill="#fff"/></svg>
<div class="r" style="left:296.00px;top:693.94px;width:3.00px;height:19.41px;background:transparent;background:linear-gradient(to right,rgba(204,211,244,0.45) 0 1px,#ccd3f4 1px 2px,rgba(204,211,244,0.45) 2px 3px);"></div>
<div class="r" style="left:339.00px;top:693.94px;width:3.00px;height:19.41px;background:transparent;background:linear-gradient(to right,rgba(204,211,244,0.45) 0 1px,#ccd3f4 1px 2px,rgba(204,211,244,0.45) 2px 3px);"></div>
<div class="r" style="left:578.00px;top:693.94px;width:3.00px;height:19.41px;background:transparent;background:linear-gradient(to right,rgba(204,211,244,0.45) 0 1px,#ccd3f4 1px 2px,rgba(204,211,244,0.45) 2px 3px);"></div>
<div class="t" style="left:225.60px;top:693.94px;color:#ccd3f4;-webkit-text-stroke:0.4px #ccd3f4;">Oct 07</div>
<div class="t" style="left:353.85px;top:693.94px;color:#ccd3f4;-webkit-text-stroke:0.4px #ccd3f4;">Brian Tarricone</div>
<div class="t" style="left:593.25px;top:693.94px;color:#ccd3f4;-webkit-text-stroke:0.4px #ccd3f4;">ANNOUNCE: libxfce4windowing 4.19.6 released</div>
<div class="r" style="left:296.00px;top:713.34px;width:3.00px;height:19.41px;background:transparent;background:linear-gradient(to right,rgba(242,238,226,0.45) 0 1px,#f2eee2 1px 2px,rgba(242,238,226,0.45) 2px 3px);"></div>
<div class="r" style="left:339.00px;top:713.34px;width:3.00px;height:19.41px;background:transparent;background:linear-gradient(to right,rgba(242,238,226,0.45) 0 1px,#f2eee2 1px 2px,rgba(242,238,226,0.45) 2px 3px);"></div>
<div class="r" style="left:578.00px;top:713.34px;width:3.00px;height:19.41px;background:transparent;background:linear-gradient(to right,rgba(242,238,226,0.45) 0 1px,#f2eee2 1px 2px,rgba(242,238,226,0.45) 2px 3px);"></div>
<div class="t" style="left:225.60px;top:713.34px;color:#f2eee2;-webkit-text-stroke:0.4px #f2eee2;">Oct 09</div>
<div class="t" style="left:353.85px;top:713.34px;color:#f2eee2;-webkit-text-stroke:0.4px #f2eee2;">Andrew Dunstan</div>
<div class="t" style="left:593.25px;top:713.34px;color:#f2eee2;-webkit-text-stroke:0.4px #f2eee2;">Re: Should CSV parsing be stricter about mid-field quotes?</div>
<div class="r" style="left:296.00px;top:732.75px;width:3.00px;height:19.41px;background:transparent;background:linear-gradient(to right,rgba(242,238,226,0.45) 0 1px,#f2eee2 1px 2px,rgba(242,238,226,0.45) 2px 3px);"></div>
<div class="r" style="left:339.00px;top:732.75px;width:3.00px;height:19.41px;background:transparent;background:linear-gradient(to right,rgba(242,238,226,0.45) 0 1px,#f2eee2 1px 2px,rgba(242,238,226,0.45) 2px 3px);"></div>
<div class="r" style="left:578.00px;top:732.75px;width:3.00px;height:19.41px;background:transparent;background:linear-gradient(to right,rgba(242,238,226,0.45) 0 1px,#f2eee2 1px 2px,rgba(242,238,226,0.45) 2px 3px);"></div>
<div class="t" style="left:225.60px;top:732.75px;color:#f2eee2;-webkit-text-stroke:0.4px #f2eee2;">Oct 09</div>
<div class="t" style="left:353.85px;top:732.75px;color:#f2eee2;-webkit-text-stroke:0.4px #f2eee2;">Alexander Kuznetsov</div>
<div class="t" style="left:593.25px;top:732.75px;color:#f2eee2;-webkit-text-stroke:0.4px #f2eee2;">Re: [PATCH] Check for TupleTableSlot nullness before dereferencing</div>
<div class="r" style="left:225.00px;top:752.15px;width:931.95px;height:19.41px;background:#373a50;"></div>
<div class="r" style="left:296.00px;top:752.15px;width:3.00px;height:19.41px;background:transparent;background:linear-gradient(to right,rgba(242,238,226,0.45) 0 1px,#f2eee2 1px 2px,rgba(242,238,226,0.45) 2px 3px);"></div>
<div class="r" style="left:339.00px;top:752.15px;width:3.00px;height:19.41px;background:transparent;background:linear-gradient(to right,rgba(242,238,226,0.45) 0 1px,#f2eee2 1px 2px,rgba(242,238,226,0.45) 2px 3px);"></div>
<div class="r" style="left:578.00px;top:752.15px;width:3.00px;height:19.41px;background:transparent;background:linear-gradient(to right,rgba(242,238,226,0.45) 0 1px,#f2eee2 1px 2px,rgba(242,238,226,0.45) 2px 3px);"></div>
<div class="t" style="left:225.60px;top:752.15px;color:#f2eee2;-webkit-text-stroke:0.4px #f2eee2;">Oct 09</div>
<div class="t" style="left:319.65px;top:752.15px;color:#f2eee2;-webkit-text-stroke:0.4px #f2eee2;">a</div>
<div class="t" style="left:353.85px;top:752.15px;color:#f2eee2;-webkit-text-stroke:0.4px #f2eee2;">Aleksander Alekseev</div>
<div class="t" style="left:593.25px;top:752.15px;color:#f2eee2;-webkit-text-stroke:0.4px #f2eee2;">[PATCH] Refactor bytea_sortsupport()</div>
<div class="r" style="left:54.00px;top:771.56px;width:1120.05px;height:19.41px;background:#373a50;"></div>
<div class="t" style="left:54.60px;top:771.56px;color:#8f99c2;-webkit-text-stroke:0.3px #8f99c2;">[Acme Corp] Connected</div>
<div class="r" style="left:1151.80px;top:774.00px;width:2.20px;height:14.50px;background:#8f99c2;"></div>
<div class="r" style="left:1165.5px;top:776px;width:8.55px;height:10px;overflow:hidden"><svg width="10" height="10" viewBox="0 0 10 10" style="position:absolute;left:0;top:0"><path d="M1.2 6.4 C2 3.6 3.4 3.4 4.6 5 C5.8 6.6 7.2 6.4 8.4 3.8" stroke="#8f99c2" stroke-width="1.6" fill="none"/></svg></div>
</body></html>
